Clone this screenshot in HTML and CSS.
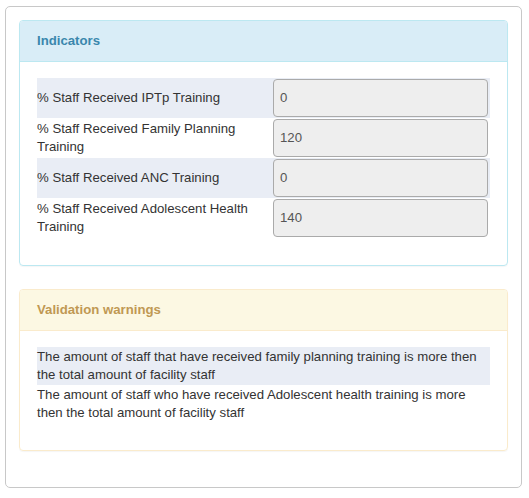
FILE: index.html
```html
<!DOCTYPE html>
<html>
<head>
<meta charset="utf-8">
<link rel="stylesheet" href="styles.css">
</head>
<body>
<div class="outer">
  <div class="panel panel-info">
    <div class="panel-heading">Indicators</div>
    <div class="panel-body">
      <div class="row odd">
        <div class="label">% Staff Received IPTp Training</div>
        <div class="field"><div class="input">0</div></div>
      </div>
      <div class="row">
        <div class="label">% Staff Received Family Planning Training</div>
        <div class="field"><div class="input">120</div></div>
      </div>
      <div class="row odd">
        <div class="label">% Staff Received ANC Training</div>
        <div class="field"><div class="input">0</div></div>
      </div>
      <div class="row">
        <div class="label">% Staff Received Adolescent Health Training</div>
        <div class="field"><div class="input">140</div></div>
      </div>
    </div>
  </div>
  <div class="panel panel-warning">
    <div class="panel-heading">Validation warnings</div>
    <div class="panel-body">
      <div class="warn odd">The amount of staff that have received family planning training is more then the total amount of facility staff</div>
      <div class="warn">The amount of staff who have received Adolescent health training is more then the total amount of facility staff</div>
    </div>
  </div>
</div>
</body>
</html>
```
FILE: styles.css
```css
html, body {
  margin: 0;
  padding: 0;
  background: #fff;
}
body {
  font-family: "Liberation Sans", Arial, sans-serif;
  font-size: 13.2px;
  color: #333;
}
.outer {
  margin: 6px 0 0 5px;
  width: 517px;
  height: 482px;
  box-sizing: border-box;
  border: 1px solid #c8c8c8;
  border-radius: 5px;
  padding: 13px;
  display: flex;
  flex-direction: column;
  gap: 23px;
}
.panel {
  border: 1px solid;
  border-radius: 4px;
  box-shadow: 0 1px 1px rgba(0,0,0,0.04);
}
.panel-heading {
  height: 40px;
  line-height: 40px;
  padding: 0 17px;
  font-weight: bold;
  font-size: 13.2px;
  border-bottom: 1px solid;
  border-radius: 3px 3px 0 0;
}
.panel-info { border-color: #bce8f1; }
.panel-info .panel-heading {
  background: #d9edf7;
  border-bottom-color: #bce8f1;
  color: #3a87ad;
}
.panel-warning { border-color: #faebcc; }
.panel-warning .panel-heading {
  background: #fcf8e3;
  border-bottom-color: #faebcc;
  color: #c09853;
}
.panel-body {
  padding: 16px 17px 27px;
}
.row {
  display: flex;
  height: 40px;
  align-items: center;
}
.odd {
  background: #e9edf5;
}
.label {
  width: 236px;
  line-height: 18px;
  flex: none;
}
.field {
  flex: 1;
}
.input {
  width: 215px;
  height: 38px;
  box-sizing: border-box;
  border: 1px solid #aaa;
  border-radius: 4px;
  background: #eee;
  color: #555;
  padding-left: 6px;
  line-height: 36px;
}
.warn {
  line-height: 18px;
  padding: 1px 0;
}
```
